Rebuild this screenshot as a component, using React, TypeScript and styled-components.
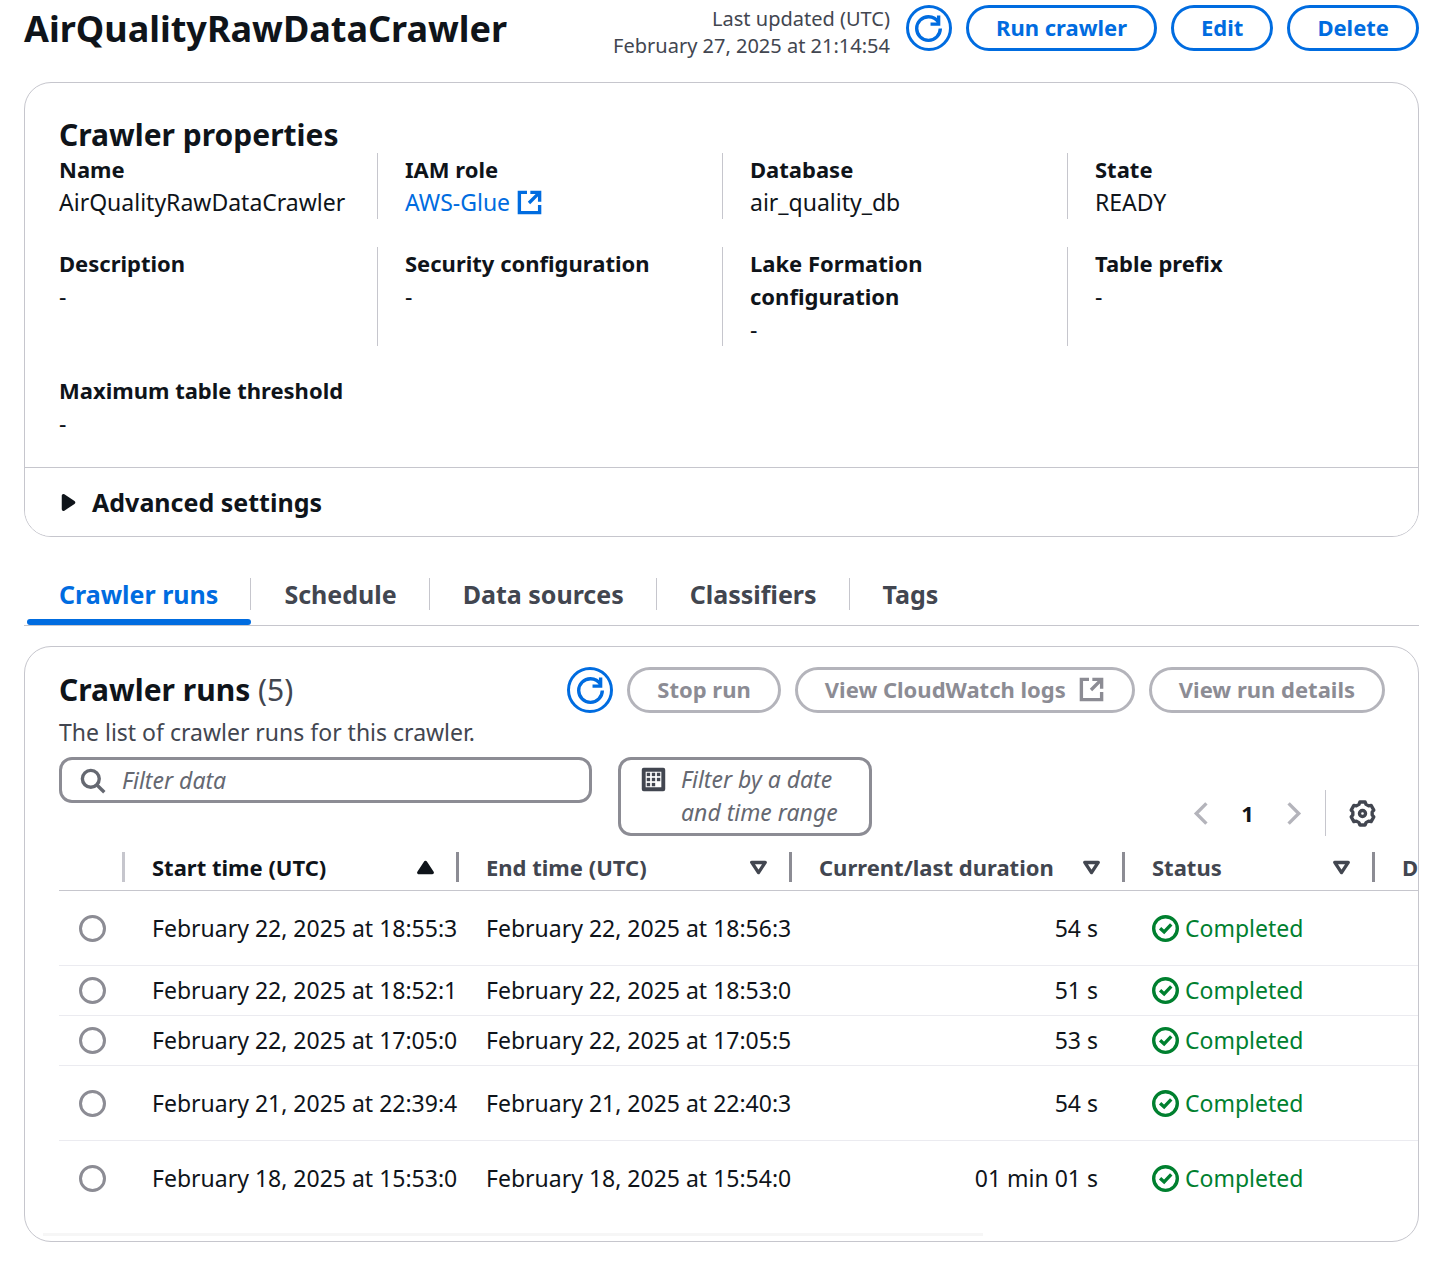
import React from "react";
import styled, { createGlobalStyle, css } from "styled-components";

const color = {
  text: "#0f141a",
  muted: "#424650",
  placeholder: "#656871",
  link: "#006ce0",
  line: "#c6c6cd",
  rowLine: "#ebebf0",
  control: "#8c8c94",
  disabled: "#b4b4bb",
  success: "#00802f",
};

const GlobalStyle = createGlobalStyle`
  *, *::before, *::after { box-sizing: border-box; }
  body {
    margin: 0;
    background: #fff;
    color: ${color.text};
    font-family: "Noto Sans", "Open Sans", sans-serif;
    font-size: 23px;
    line-height: 33px;
  }
  button, input { font: inherit; color: inherit; }
  h1, h2, p, dl, dd { margin: 0; }
`;

const Page = styled.main`
  padding: 5px 16px 24px 24px;
`;

const HeaderBar = styled.header`
  display: flex;
  align-items: flex-start;
  justify-content: space-between;
  gap: 14px;
`;

const PageTitle = styled.h1`
  font-size: 36px;
  line-height: 48px;
  font-weight: 700;
`;

const Actions = styled.div`
  display: flex;
  gap: 14px;
  white-space: nowrap;
`;

const Updated = styled.p`
  margin-right: 2px;
  color: ${color.muted};
  font-size: 20px;
  line-height: 27px;
  text-align: right;
`;

const Button = styled.button<{ $round?: boolean }>`
  display: inline-flex;
  align-items: center;
  justify-content: center;
  gap: 12px;
  height: 46px;
  padding: 0 27px 2px;
  border: 3px solid ${color.link};
  border-radius: 23px;
  background: #fff;
  color: ${color.link};
  font-size: 22px;
  font-weight: 700;
  white-space: nowrap;
  ${(p) => p.$round && css`width: 46px; padding: 0;`}
  &:disabled {
    border-color: ${color.disabled};
    color: ${color.control};
  }
`;

const Card = styled.section`
  border: 1px solid ${color.line};
  border-radius: 27px;
  overflow: hidden;
`;

const PropertiesCard = styled(Card)`
  margin-top: 23px;
`;

const PropertiesBody = styled.div`
  padding: 34px 33px 27px 34px;
`;

const CardTitle = styled.h2`
  font-size: 30px;
  line-height: 36px;
  font-weight: 700;
`;

const Counter = styled.span`
  color: ${color.muted};
  font-weight: 400;
`;

const PropertyGrid = styled.dl`
  display: grid;
  grid-template-columns: repeat(4, minmax(0, 1fr));
  gap: 28px 54px;
`;

const Property = styled.div`
  &:not(:nth-child(4n + 1)) {
    margin-left: -27px;
    padding-left: 27px;
    border-left: 1px solid ${color.line};
  }
  dt {
    font-size: 22px;
    font-weight: 700;
  }
`;

const Link = styled.a`
  display: inline-flex;
  align-items: center;
  gap: 6px;
  color: ${color.link};
  text-decoration: none;
`;

const Expander = styled.button`
  display: flex;
  align-items: center;
  gap: 10px;
  width: 100%;
  padding: 17px 30px;
  border: 0;
  border-top: 1px solid ${color.line};
  background: #fff;
  font-size: 25px;
  line-height: 34px;
  font-weight: 700;
`;

const TabList = styled.div`
  display: flex;
  gap: 1px;
  margin-top: 34px;
  padding-left: 3px;
  border-bottom: 1px solid ${color.line};
`;

const Tab = styled.button<{ $active?: boolean }>`
  display: flex;
  padding: 7px 0 9px;
  border: 0;
  border-bottom: 6px solid transparent;
  background: none;
  color: ${color.muted};
  font-size: 25px;
  line-height: 32px;
  font-weight: 700;
  position: relative;
  span { padding: 0 32px; }
  &:not(:last-child) span { border-right: 1px solid ${color.line}; }
  ${(p) => p.$active && css`
    color: ${color.link};
    &::after {
      content: "";
      position: absolute;
      left: 0;
      right: 0;
      bottom: -6px;
      height: 6px;
      border-radius: 3px;
      background: ${color.link};
    }
  `}
`;

const RunsCard = styled(Card)`
  margin-top: 20px;
`;

const RunsHeader = styled.div`
  padding: 20px 33px 0 34px;
`;

const TitleRow = styled.div`
  display: flex;
  align-items: center;
  justify-content: space-between;
`;

const Description = styled.p`
  margin-top: 3px;
  color: ${color.muted};
`;

const Tools = styled.div`
  display: flex;
  align-items: flex-start;
  gap: 26px;
  margin-top: 8px;
`;

const SearchBox = styled.label`
  display: flex;
  align-items: center;
  gap: 16px;
  flex: 0 1 533px;
  height: 46px;
  padding: 0 17px;
  border: 3px solid ${color.control};
  border-radius: 13px;
  color: ${color.placeholder};
  svg { flex: none; }
  input {
    flex: 1;
    min-width: 0;
    padding: 0;
    border: 0;
    outline: 0;
    background: none;
  }
  input::placeholder {
    color: ${color.placeholder};
    font-style: italic;
    opacity: 1;
  }
`;

const DateFilter = styled.button`
  display: flex;
  gap: 14px;
  width: 254px;
  padding: 3px 18px 4px 19px;
  border: 3px solid ${color.control};
  border-radius: 13px;
  background: #fff;
  color: ${color.placeholder};
  font-style: italic;
  text-align: left;
  svg { flex: none; margin-top: 3px; color: ${color.muted}; }
`;

const Pager = styled.nav`
  display: flex;
  align-items: center;
  align-self: flex-end;
  height: 46px;
  margin-left: auto;
`;

const PagerButton = styled.button<{ $current?: boolean }>`
  display: flex;
  align-items: center;
  justify-content: center;
  width: 47px;
  height: 46px;
  padding: 0;
  border: 0;
  background: none;
  color: ${(p) => (p.$current ? color.text : color.disabled)};
  font-size: 22px;
  font-weight: 700;
`;

const SettingsButton = styled(PagerButton)`
  margin-left: 7px;
  width: 60px;
  padding-left: 13px;
  border-left: 1px solid ${color.line};
  color: ${color.muted};
`;

const TableScroller = styled.div`
  margin: 8px 0 0 34px;
  overflow: hidden;
`;

const Table = styled.table`
  width: 1565px;
  table-layout: fixed;
  border-collapse: separate;
  border-spacing: 0;
`;

const HeadCell = styled.th<{ $sorted?: boolean }>`
  height: 47px;
  padding: 0;
  border-bottom: 1px solid ${color.line};
  color: ${(p) => (p.$sorted ? color.text : color.muted)};
  font-size: 22px;
  text-align: left;
`;

const HeadContent = styled.div<{ $light?: boolean }>`
  display: flex;
  align-items: center;
  justify-content: space-between;
  height: 30px;
  padding: 0 17px 0 27px;
  border-right: 3px solid ${(p) => (p.$light ? color.line : color.control)};
  white-space: nowrap;
`;

const Row = styled.tr<{ $tall?: boolean }>`
  height: ${(p) => (p.$tall ? 75 : 50)}px;
  &:not(:last-child) td { border-bottom: 1px solid ${color.rowLine}; }
`;

const Cell = styled.td<{ $end?: boolean }>`
  padding: 0 ${(p) => (p.$end ? 27 : 0)}px 0 27px;
  overflow: hidden;
  text-align: ${(p) => (p.$end ? "right" : "left")};
  white-space: nowrap;
`;

const RadioCell = styled(Cell)`
  padding-left: 20px;
`;

const Radio = styled.input`
  display: block;
  appearance: none;
  width: 27px;
  height: 27px;
  margin: 0;
  border: 3px solid ${color.control};
  border-radius: 50%;
  background: #fff;
  &:checked { border: 8px solid ${color.link}; }
`;

const Status = styled.span`
  display: flex;
  align-items: center;
  gap: 6px;
  color: ${color.success};
`;

const ScrollTrack = styled.div`
  width: 940px;
  max-width: 100%;
  height: 3px;
  margin: 17px 0 5px 18px;
  background: #f6f6f6;
`;

type IconProps = { children: React.ReactNode; size?: number };

const Icon = ({ children, size = 27 }: IconProps) => (
  <svg width={size} height={size} viewBox="0 0 16 16" fill="none" stroke="currentColor" strokeWidth="2" aria-hidden="true">
    {children}
  </svg>
);

const RefreshIcon = () => (
  <Icon>
    <path d="M9.2 5.4H14V.3" />
    <path d="M15 8a7 7 0 1 1-7-7 7 7 0 0 1 6 3.500" />
  </Icon>
);

const ExternalIcon = () => (
  <Icon>
    <path d="M6.5 2H2v12h12V9.5M8.5 2H14v5.5M14 2 7.7 8.3" />
  </Icon>
);

const SearchIcon = () => (
  <Icon>
    <circle cx="7" cy="7" r="5" />
    <path d="m15 15-4.5-4.5" />
  </Icon>
);

const calendarDays = [
  [4, 4], [7, 4], [10, 4],
  [4, 7], [7, 7], [10, 7],
  [4, 10], [7, 10],
];

const CalendarIcon = () => (
  <Icon>
    <path d="M2.2 2.2h11.6v11.6H2.2z" strokeWidth="2.3" strokeLinejoin="round" />
    {calendarDays.map(([x, y]) => (
      <rect key={`${x}-${y}`} x={x} y={y} width="2" height="2" fill="currentColor" stroke="none" />
    ))}
  </Icon>
);

const polar = (degrees: number, radius: number) => {
  const angle = (degrees * Math.PI) / 180;
  return `${(8 + radius * Math.cos(angle)).toFixed(2)},${(8 + radius * Math.sin(angle)).toFixed(2)}`;
};

const gearOutline = [-90, -30, 30, 90, 150, 210]
  .map((a) => [polar(a - 13, 7), polar(a + 13, 7), polar(a + 21, 5.8), polar(a + 39, 5.8)].join(" "))
  .join(" ");

const GearIcon = () => (
  <Icon>
    <polygon points={gearOutline} strokeLinejoin="round" />
    <circle cx="8" cy="8" r="1.8" />
  </Icon>
);

const CheckIcon = () => (
  <Icon>
    <circle cx="8" cy="8" r="7" />
    <path d="m4.8 7.8 2.4 2.2 4.2-4.4" />
  </Icon>
);

const ChevronIcon = ({ next }: { next?: boolean }) => (
  <Icon>
    <path d={next ? "m4.5 2 6 6-6 6" : "m11.5 2-6 6 6 6"} />
  </Icon>
);

const ExpandIcon = () => (
  <Icon>
    <path d="M5 4v8l6-4z" fill="currentColor" strokeLinejoin="round" />
  </Icon>
);

const SortIcon = ({ ascending }: { ascending?: boolean }) => (
  <Icon>
    {ascending ? (
      <path d="M4 11h8L8 5z" fill="currentColor" strokeLinejoin="round" />
    ) : (
      <path d="M4 5h8l-4 6z" strokeLinejoin="round" />
    )}
  </Icon>
);

const properties: { label: string; value: React.ReactNode }[] = [
  { label: "Name", value: "AirQualityRawDataCrawler" },
  { label: "IAM role", value: <Link href="#iam-role">AWS-Glue <ExternalIcon /></Link> },
  { label: "Database", value: "air_quality_db" },
  { label: "State", value: "READY" },
  { label: "Description", value: "-" },
  { label: "Security configuration", value: "-" },
  { label: "Lake Formation configuration", value: "-" },
  { label: "Table prefix", value: "-" },
  { label: "Maximum table threshold", value: "-" },
];

const tabs = ["Crawler runs", "Schedule", "Data sources", "Classifiers", "Tags"];
const columns = ["Start time (UTC)", "End time (UTC)", "Current/last duration", "Status"];

const runs = [
  { start: "February 22, 2025 at 18:55:3", end: "February 22, 2025 at 18:56:3", duration: "54 s", tall: true },
  { start: "February 22, 2025 at 18:52:1", end: "February 22, 2025 at 18:53:0", duration: "51 s" },
  { start: "February 22, 2025 at 17:05:0", end: "February 22, 2025 at 17:05:5", duration: "53 s" },
  { start: "February 21, 2025 at 22:39:4", end: "February 21, 2025 at 22:40:3", duration: "54 s", tall: true },
  { start: "February 18, 2025 at 15:53:0", end: "February 18, 2025 at 15:54:0", duration: "01 min 01 s", tall: true },
];

export default function App() {
  return (
    <Page>
      <GlobalStyle />
      <HeaderBar>
        <PageTitle>AirQualityRawDataCrawler</PageTitle>
        <Actions>
          <Updated>
            Last updated (UTC)
            <br />
            February 27, 2025 at 21:14:54
          </Updated>
          <Button $round aria-label="Refresh crawler"><RefreshIcon /></Button>
          <Button>Run crawler</Button>
          <Button>Edit</Button>
          <Button>Delete</Button>
        </Actions>
      </HeaderBar>

      <PropertiesCard>
        <PropertiesBody>
          <CardTitle>Crawler properties</CardTitle>
          <PropertyGrid>
            {properties.map((p) => (
              <Property key={p.label}>
                <dt>{p.label}</dt>
                <dd>{p.value}</dd>
              </Property>
            ))}
          </PropertyGrid>
        </PropertiesBody>
        <Expander aria-expanded={false}>
          <ExpandIcon />
          Advanced settings
        </Expander>
      </PropertiesCard>

      <TabList role="tablist">
        {tabs.map((tab, i) => (
          <Tab key={tab} role="tab" aria-selected={i === 0} $active={i === 0}>
            <span>{tab}</span>
          </Tab>
        ))}
      </TabList>

      <RunsCard>
        <RunsHeader>
          <TitleRow>
            <CardTitle>
              Crawler runs <Counter>(5)</Counter>
            </CardTitle>
            <Actions>
              <Button $round aria-label="Refresh runs"><RefreshIcon /></Button>
              <Button disabled>Stop run</Button>
              <Button disabled>View CloudWatch logs <ExternalIcon /></Button>
              <Button disabled>View run details</Button>
            </Actions>
          </TitleRow>
          <Description>The list of crawler runs for this crawler.</Description>
          <Tools>
            <SearchBox>
              <SearchIcon />
              <input type="search" placeholder="Filter data" aria-label="Filter data" />
            </SearchBox>
            <DateFilter>
              <CalendarIcon />
              Filter by a date and time range
            </DateFilter>
            <Pager aria-label="Pagination">
              <PagerButton disabled aria-label="Previous page"><ChevronIcon /></PagerButton>
              <PagerButton $current aria-current="page">1</PagerButton>
              <PagerButton disabled aria-label="Next page"><ChevronIcon next /></PagerButton>
              <SettingsButton aria-label="Table settings"><GearIcon /></SettingsButton>
            </Pager>
          </Tools>
        </RunsHeader>
        <TableScroller>
          <Table>
            <colgroup>
              <col width="66" />
              <col width="334" />
              <col width="333" />
              <col width="333" />
              <col width="250" />
              <col width="249" />
            </colgroup>
            <thead>
              <tr>
                <HeadCell aria-label="Selection"><HeadContent $light /></HeadCell>
                {columns.map((name, i) => (
                  <HeadCell key={name} $sorted={i === 0} aria-sort={i === 0 ? "ascending" : "none"}>
                    <HeadContent>
                      {name}
                      <SortIcon ascending={i === 0} />
                    </HeadContent>
                  </HeadCell>
                ))}
                <HeadCell><HeadContent>D</HeadContent></HeadCell>
              </tr>
            </thead>
            <tbody>
              {runs.map((run) => (
                <Row key={run.start} $tall={run.tall}>
                  <RadioCell>
                    <Radio type="radio" name="run" aria-label={`Select run ${run.start}`} />
                  </RadioCell>
                  <Cell>{run.start}</Cell>
                  <Cell>{run.end}</Cell>
                  <Cell $end>{run.duration}</Cell>
                  <Cell>
                    <Status><CheckIcon />Completed</Status>
                  </Cell>
                  <Cell />
                </Row>
              ))}
            </tbody>
          </Table>
        </TableScroller>
        <ScrollTrack />
      </RunsCard>
    </Page>
  );
}
